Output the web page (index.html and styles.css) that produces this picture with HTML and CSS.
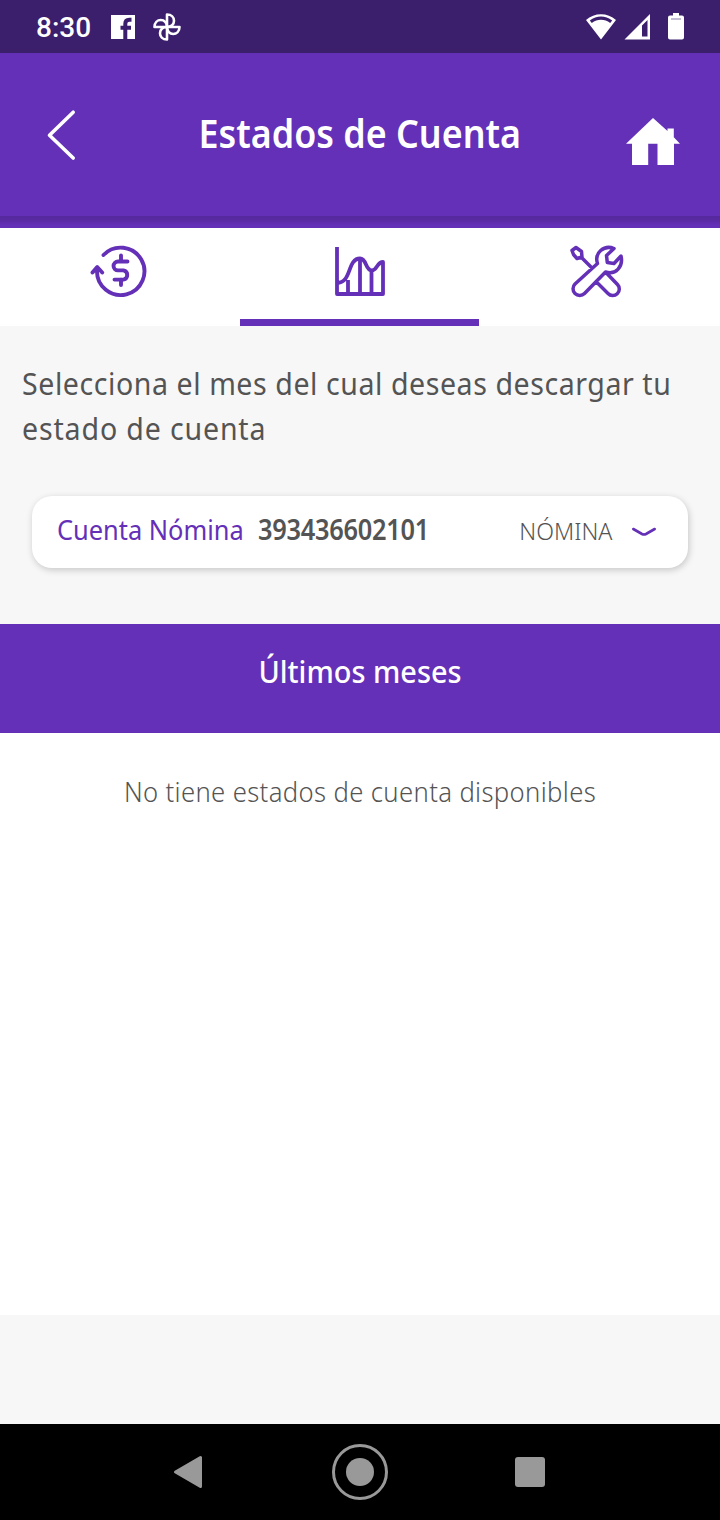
FILE: index.html
```html
<!DOCTYPE html>
<html lang="es">
<head>
<meta charset="utf-8">
<title>Estados de Cuenta</title>
<link rel="stylesheet" href="styles.css">
</head>
<body>
<div class="screen">
  <div class="status">
    <span class="clock">8:30</span>
    <svg class="facebook" width="24" height="24" viewBox="0 0 24 24"><path fill="#fff" d="M0 0h24v24H0z"/><path d="M14.300 24V8.800q0-4 4-4H20.500M9.500 12.700H20" fill="none" stroke="#3b1e6c" stroke-width="4"/></svg>
    <svg class="pinwheel" width="30" height="30" viewBox="0 0 30 30"><g fill="none" stroke="#fff" stroke-width="2.600" stroke-linejoin="round"><path d="M15 15V2.500c4.500 0 7 3 7 6.300 0 3.500-2.600 6.200-7 6.200"/><path d="M15 15V2.500c4.500 0 7 3 7 6.300 0 3.500-2.600 6.200-7 6.200" transform="rotate(90 15 15)"/><path d="M15 15V2.500c4.500 0 7 3 7 6.300 0 3.500-2.600 6.200-7 6.200" transform="rotate(180 15 15)"/><path d="M15 15V2.500c4.500 0 7 3 7 6.300 0 3.500-2.600 6.200-7 6.200" transform="rotate(270 15 15)"/></g></svg>
    <svg class="signals" width="100" height="28" viewBox="0 0 100 28"><g fill="#fff"><path fill-rule="evenodd" d="M1 7C9.500-.8 22.500-.8 31 7L16 26.500zM4.800 7.600l2 2.400c5.600-4.200 12.800-4.200 18.400 0l2-2.400C20.300 2.200 11.700 2.200 4.800 7.600z"/><path fill-rule="evenodd" d="M65 1v25.500H39.500zM57 12.500v11h5.500V7z"/><path d="M88 0h6v2.500h3q2 0 2 2v20q0 2-2 2H85q-2 0-2-2v-20q0-2 2-2h3z"/></g><path d="M86 6h10" stroke="#3b1e6c" stroke-width=".6"/></svg>
  </div>
  <header class="header">
    <svg width="30" height="54" viewBox="0 0 30 54"><path d="M27.200 4.200 3.500 27.300l23.700 22.700" fill="none" stroke="#fff" stroke-width="3.600" stroke-linecap="round" stroke-linejoin="round"/></svg>
    <h1 class="title">Estados de Cuenta</h1>
    <svg class="home" width="54" height="49" viewBox="0 0 54 49"><path fill="#fff" d="M27 1 41.500 14v-2.500h6.300v8.800L54 26.800h-6V48H31.500V26.800H22.200V48H6V26.800H0z"/></svg>
  </header>
  <div class="header-edge"></div>
  <nav class="tabs">
    <div class="tab"><svg width="60" height="56" viewBox="0 0 60 56"><g fill="none" stroke="#6430b7" stroke-width="3.900" stroke-linecap="round" stroke-linejoin="round"><path d="M13.500 11A23.700 23.700 0 1 1 7 26.500M2.500 28.500l4.700-5.500 5 5.500M31 11.500v6M31 35.500v5.500M37.500 17.500H28a4.300 4.300 0 0 0 0 8.900h5.500a4.700 4.700 0 0 1 0 9.200H24.500"/></g></svg></div>
    <div class="tab active"><svg width="56" height="56" viewBox="0 0 56 56"><g fill="none" stroke="#6430b7" stroke-width="3.800" stroke-linejoin="round"><path d="M5 3v47h46V18c-6 0-6 8.500-11 8.500C33 26.500 35 14.500 28 14.500c-13 0-8 24.500-23 24.500M16 50V36M28 50V16M39.500 50V27"/></g></svg></div>
    <div class="tab tools"><svg width="58" height="56" viewBox="0 0 58 56"><g fill="none" stroke="#6430b7" stroke-width="3.500" stroke-linejoin="round"><path d="M30.500 19.500C27 9 37 .5 47 4.500L39.500 11.500l.8 7 6.700 1L54 12C56.500 22 49 31.500 38.500 28L17.500 49.500a6.500 6.500 0 0 1-9.500-9.500zM5 6.500 9 3.500l5.500 4 .5 5.500-5 1.500-3.500-4zM14.500 13.500 25 24M29.500 38 41 49.500a6.500 6.500 0 0 0 9.500-9L38.500 28"/></g></svg></div>
  </nav>
  <section class="intro">
    <p class="prompt">Selecciona el mes del cual deseas descargar tu<br><span class="second">estado de cuenta</span></p>
    <div class="account">
      <span class="name">Cuenta Nómina</span>
      <span class="number">393436602101</span>
      <span class="kind">NÓMINA</span>
      <svg width="26" height="14" viewBox="0 0 26 14"><path d="M2.300 3 11 8q2 1 4 0l8.700-5" fill="none" stroke="#6430b7" stroke-width="2.600" stroke-linecap="round"/></svg>
    </div>
  </section>
  <section class="months"><h2 class="months-title">Últimos meses</h2></section>
  <main class="results"><p class="empty">No tiene estados de cuenta disponibles</p></main>
  <div class="footer"></div>
  <div class="navbar">
    <svg width="720" height="96" viewBox="0 0 720 96"><g fill="#999"><path d="M200.500 33.500v29L175.500 48z" stroke="#999" stroke-width="3" stroke-linejoin="round"/><circle cx="360" cy="48" r="14"/><circle cx="360" cy="48" r="26.500" fill="none" stroke="#999" stroke-width="3"/><rect x="515" y="33" width="30" height="30" rx="3"/></g></svg>
  </div>
</div>
</body>
</html>
```
FILE: styles.css
```css
* { box-sizing: border-box; }
body { margin: 0; background: #fff; font-family: "Noto Sans", "Open Sans", sans-serif; color: #545454; }
svg { display: block; flex: none; }
h1, h2, p { margin: 0; }
.screen { width: 720px; height: 1520px; display: flex; flex-direction: column; overflow: hidden; }
.screen > * { flex: none; }
.status { height: 53px; background: #3b1e6c; display: flex; align-items: center; padding: 0 35px 0 36px; color: #fff; }
.clock { font: 500 28px/53px Roboto, sans-serif; width: 75px; padding-top: 2px; }
.pinwheel { margin-left: 17px; }
.facebook { margin-top: 1px; }
.signals { margin-left: auto; }
.header { height: 163px; background: #6430b7; display: grid; grid-template-columns: 54px 1fr 54px; align-items: start; padding: 55px 40px 0 46px; color: #fff; }
.title { font-size: 39px; font-weight: 600; line-height: 50px; text-align: center; padding-right: 7px; white-space: nowrap; transform: scaleX(.919); }
.home { margin-top: 9px; }
.header-edge { height: 12px; background: linear-gradient(#56289d, #592aa3 35%, #6430b7 75%); }
.tabs { height: 98px; background: #fff; display: grid; grid-template-columns: 240px 239px 241px; }
.tab { display: flex; justify-content: center; padding-top: 16px; }
.tools { padding-right: 7px; }
.active { border-bottom: 7px solid #6430b7; }
.intro { height: 298px; background: #f7f7f7; padding: 35px 32px 0; }
.prompt { margin-left: -10px; font-size: 30px; font-weight: 500; line-height: 45px; white-space: nowrap; height: 135px; letter-spacing: 0.4px; transform: scaleX(.946); transform-origin: left; }
.second { letter-spacing: 0.7px; }
.account { height: 72px; width: 656px; background: #fff; border-radius: 20px; box-shadow: 1px 2px 7px rgba(0,0,0,.2); display: flex; align-items: center; padding: 0 31px 4px 25px; white-space: nowrap; }
.name { font-size: 28px; font-weight: 450; color: #6430b7; width: 201px; padding-bottom: 2px; transform: scaleX(.907); transform-origin: left; }
.number { font-size: 28px; font-weight: 600; letter-spacing: -0.3px; padding-bottom: 2px; transform: scaleX(.906); transform-origin: left; }
.kind { font-size: 24px; font-weight: 300; margin-left: auto; margin-right: 19px; transform: scaleX(.965); transform-origin: right; }
.account svg { margin-top: 6px; }
.months { height: 109px; background: #6430b7; color: #fff; text-align: center; }
.months-title { font-size: 31px; font-weight: 500; line-height: 95px; transform: scaleX(.932); }
.prompt { font-weight: 400; letter-spacing: 0.6px; transform: scaleX(.951); }
.second { letter-spacing: 0.9px; }
.results { height: 582px; background: #fff; text-align: center; }
.empty { font-size: 28px; font-weight: 300; line-height: 117px; letter-spacing: 0.4px; transform: scaleX(.916); }
.footer { height: 109px; background: #f7f7f7; }
.navbar { height: 96px; background: #000; }
```
